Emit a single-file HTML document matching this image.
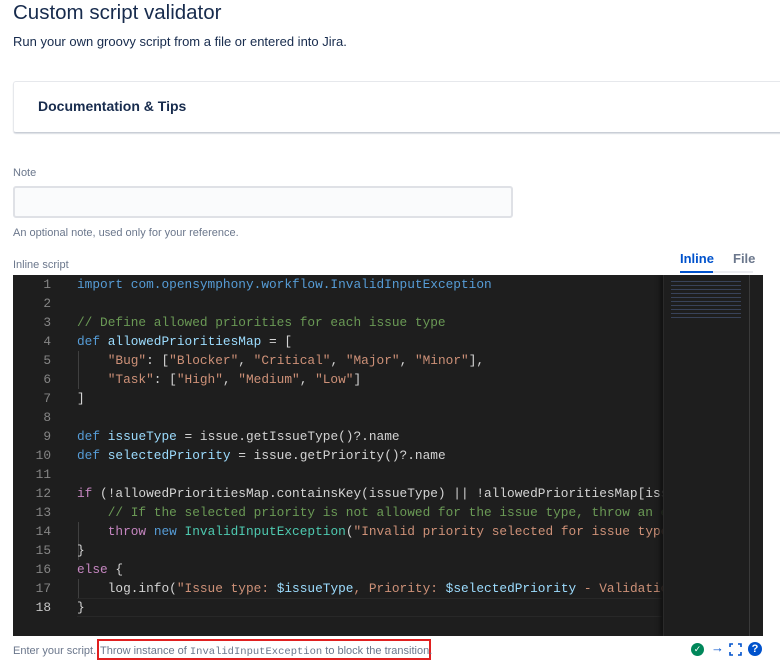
<!DOCTYPE html>
<html><head><meta charset="utf-8"><style>
body{margin:0;width:780px;height:665px;background:#fff;font-family:"Liberation Sans",sans-serif;position:relative;overflow:hidden;color:#172b4d}
.a{position:absolute}
h1{position:absolute;left:13px;top:1px;margin:0;font-size:20.5px;font-weight:normal;color:#172b4d}
.ed{left:13px;top:275px;width:750px;height:361px;background:#1e1e1e;overflow:hidden}
.code{position:absolute;left:0;top:0;font-family:"Liberation Mono",monospace;font-size:12.8px;line-height:19px;color:#d4d4d4}
.ln{position:absolute;left:0;width:38px;text-align:right;color:#858585}
.tx{position:absolute;left:64px;top:0;white-space:pre}
.k{color:#569cd6}.v{color:#9cdcfe}.s{color:#ce9178}.c{color:#6a9955}.p{color:#c586c0}.t{color:#4ec9b0}.f{color:#dcdcaa}
.g{position:absolute;left:65px;width:1px;background:#404040}
</style></head><body>
<h1>Custom script validator</h1>
<div class="a" style="left:13px;top:34px;font-size:13px;color:#172b4d">Run your own groovy script from a file or entered into Jira.</div>
<div class="a" style="left:13px;top:81px;width:780px;height:50px;border:1px solid #e6e8ec;border-bottom-color:#c9ced6;border-radius:3px;box-shadow:0 1px 1px rgba(9,30,66,.15)"></div>
<div class="a" style="left:38px;top:98px;font-size:14px;font-weight:bold;color:#172b4d">Documentation &amp; Tips</div>
<div class="a" style="left:13px;top:167px;font-size:11px;color:#6b778c">Note</div>
<div class="a" style="left:13px;top:186px;width:496px;height:28px;border:2px solid #dfe1e6;border-radius:3px;background:#fafbfc"></div>
<div class="a" style="left:13px;top:227px;font-size:11px;color:#6b778c">An optional note, used only for your reference.</div>
<div class="a" style="left:13px;top:259px;font-size:11px;color:#6b778c">Inline script</div>
<div class="a" style="left:680px;top:251px;font-size:13px;font-weight:bold;color:#0052cc">Inline</div>
<div class="a" style="left:733px;top:251px;font-size:13px;font-weight:bold;color:#6b778c">File</div>
<div class="a" style="left:680px;top:271px;width:73px;height:2px;background:#ebecf0"></div>
<div class="a" style="left:680px;top:271px;width:33px;height:2px;background:#0052cc"></div>
<div class="a ed">
<div class="g" style="top:76px;height:38px"></div>
<div class="g" style="top:247px;height:38px"></div>
<div class="g" style="top:304px;height:19px"></div>
<div class="a" style="left:64px;top:323px;width:586px;height:17px;border-top:1px solid #282828;border-bottom:1px solid #282828"></div>
<div class="code"><div class="ln" style="top:0">1</div><div class="ln" style="top:19px">2</div><div class="ln" style="top:38px">3</div><div class="ln" style="top:57px">4</div><div class="ln" style="top:76px">5</div><div class="ln" style="top:95px">6</div><div class="ln" style="top:114px">7</div><div class="ln" style="top:133px">8</div><div class="ln" style="top:152px">9</div><div class="ln" style="top:171px">10</div><div class="ln" style="top:190px">11</div><div class="ln" style="top:209px">12</div><div class="ln" style="top:228px">13</div><div class="ln" style="top:247px">14</div><div class="ln" style="top:266px">15</div><div class="ln" style="top:285px">16</div><div class="ln" style="top:304px">17</div><div class="ln" style="top:323px;color:#c6c6c6">18</div><div class="tx"><span class="k">import</span> <span class="k">com.opensymphony.workflow.InvalidInputException</span>

<span class="c">// Define allowed priorities for each issue type</span>
<span class="k">def</span> <span class="v">allowedPrioritiesMap</span> = [
    <span class="s">"Bug"</span>: [<span class="s">"Blocker"</span>, <span class="s">"Critical"</span>, <span class="s">"Major"</span>, <span class="s">"Minor"</span>],
    <span class="s">"Task"</span>: [<span class="s">"High"</span>, <span class="s">"Medium"</span>, <span class="s">"Low"</span>]
]

<span class="k">def</span> <span class="v">issueType</span> = issue.getIssueType()?.name
<span class="k">def</span> <span class="v">selectedPriority</span> = issue.getPriority()?.name

<span class="p">if</span> (!allowedPrioritiesMap.containsKey(issueType) || !allowedPrioritiesMap[issueType]
    <span class="c">// If the selected priority is not allowed for the issue type, throw an exception</span>
    <span class="p">throw</span> <span class="k">new</span> <span class="t">InvalidInputException</span>(<span class="s">"Invalid priority selected for issue type"</span>)
}
<span class="p">else</span> {
    log.info(<span class="s">"Issue type: </span><span class="v">$issueType</span><span class="s">, Priority: </span><span class="v">$selectedPriority</span><span class="s"> - Validation passed"</span>)
}</div></div>
<div class="a" style="left:650px;top:0;width:100px;height:361px;background:#1e1e1e;border-left:1px solid #2a2a2a;box-shadow:-3px 0 4px #111"></div>
<div class="a" style="left:736px;top:0;width:1px;height:361px;background:#3a3a3a"></div>
<div class="a" style="left:658px;top:4px;width:70px;height:40px;opacity:.6;background:repeating-linear-gradient(#1e1e1e 0 2px,#4a5a80 2px 3px,#1e1e1e 3px 4px)"></div>
</div>
<div class="a" style="left:13px;top:645px;font-size:11px;color:#6b778c">Enter your script.</div>
<div class="a" style="left:97px;top:639px;width:334px;height:21px;border:2px solid #e02020;box-sizing:border-box"></div>
<div class="a" style="left:100px;top:645px;font-size:11px;color:#6b778c">Throw instance of <span style="font-family:'Liberation Mono',monospace;font-size:10.5px">InvalidInputException</span> to block the transition.</div>
<div class="a" style="left:691px;top:643px;width:13px;height:13px;border-radius:50%;background:#00875a;color:#fff;font-size:9px;text-align:center;line-height:13px">✓</div>
<div class="a" style="left:711px;top:640px;font-size:13px;color:#0052cc">→</div>
<svg class="a" style="left:729px;top:643px" width="13" height="13" viewBox="0 0 13 13" fill="none" stroke="#0052cc" stroke-width="1.6"><path d="M1 4V1h3M9 1h3v3M12 9v3H9M4 12H1V9"/></svg>
<div class="a" style="left:748px;top:642px;width:14px;height:14px;border-radius:50%;background:#0052cc;color:#fff;font-size:11px;font-weight:bold;text-align:center;line-height:14px">?</div>
</body></html>
